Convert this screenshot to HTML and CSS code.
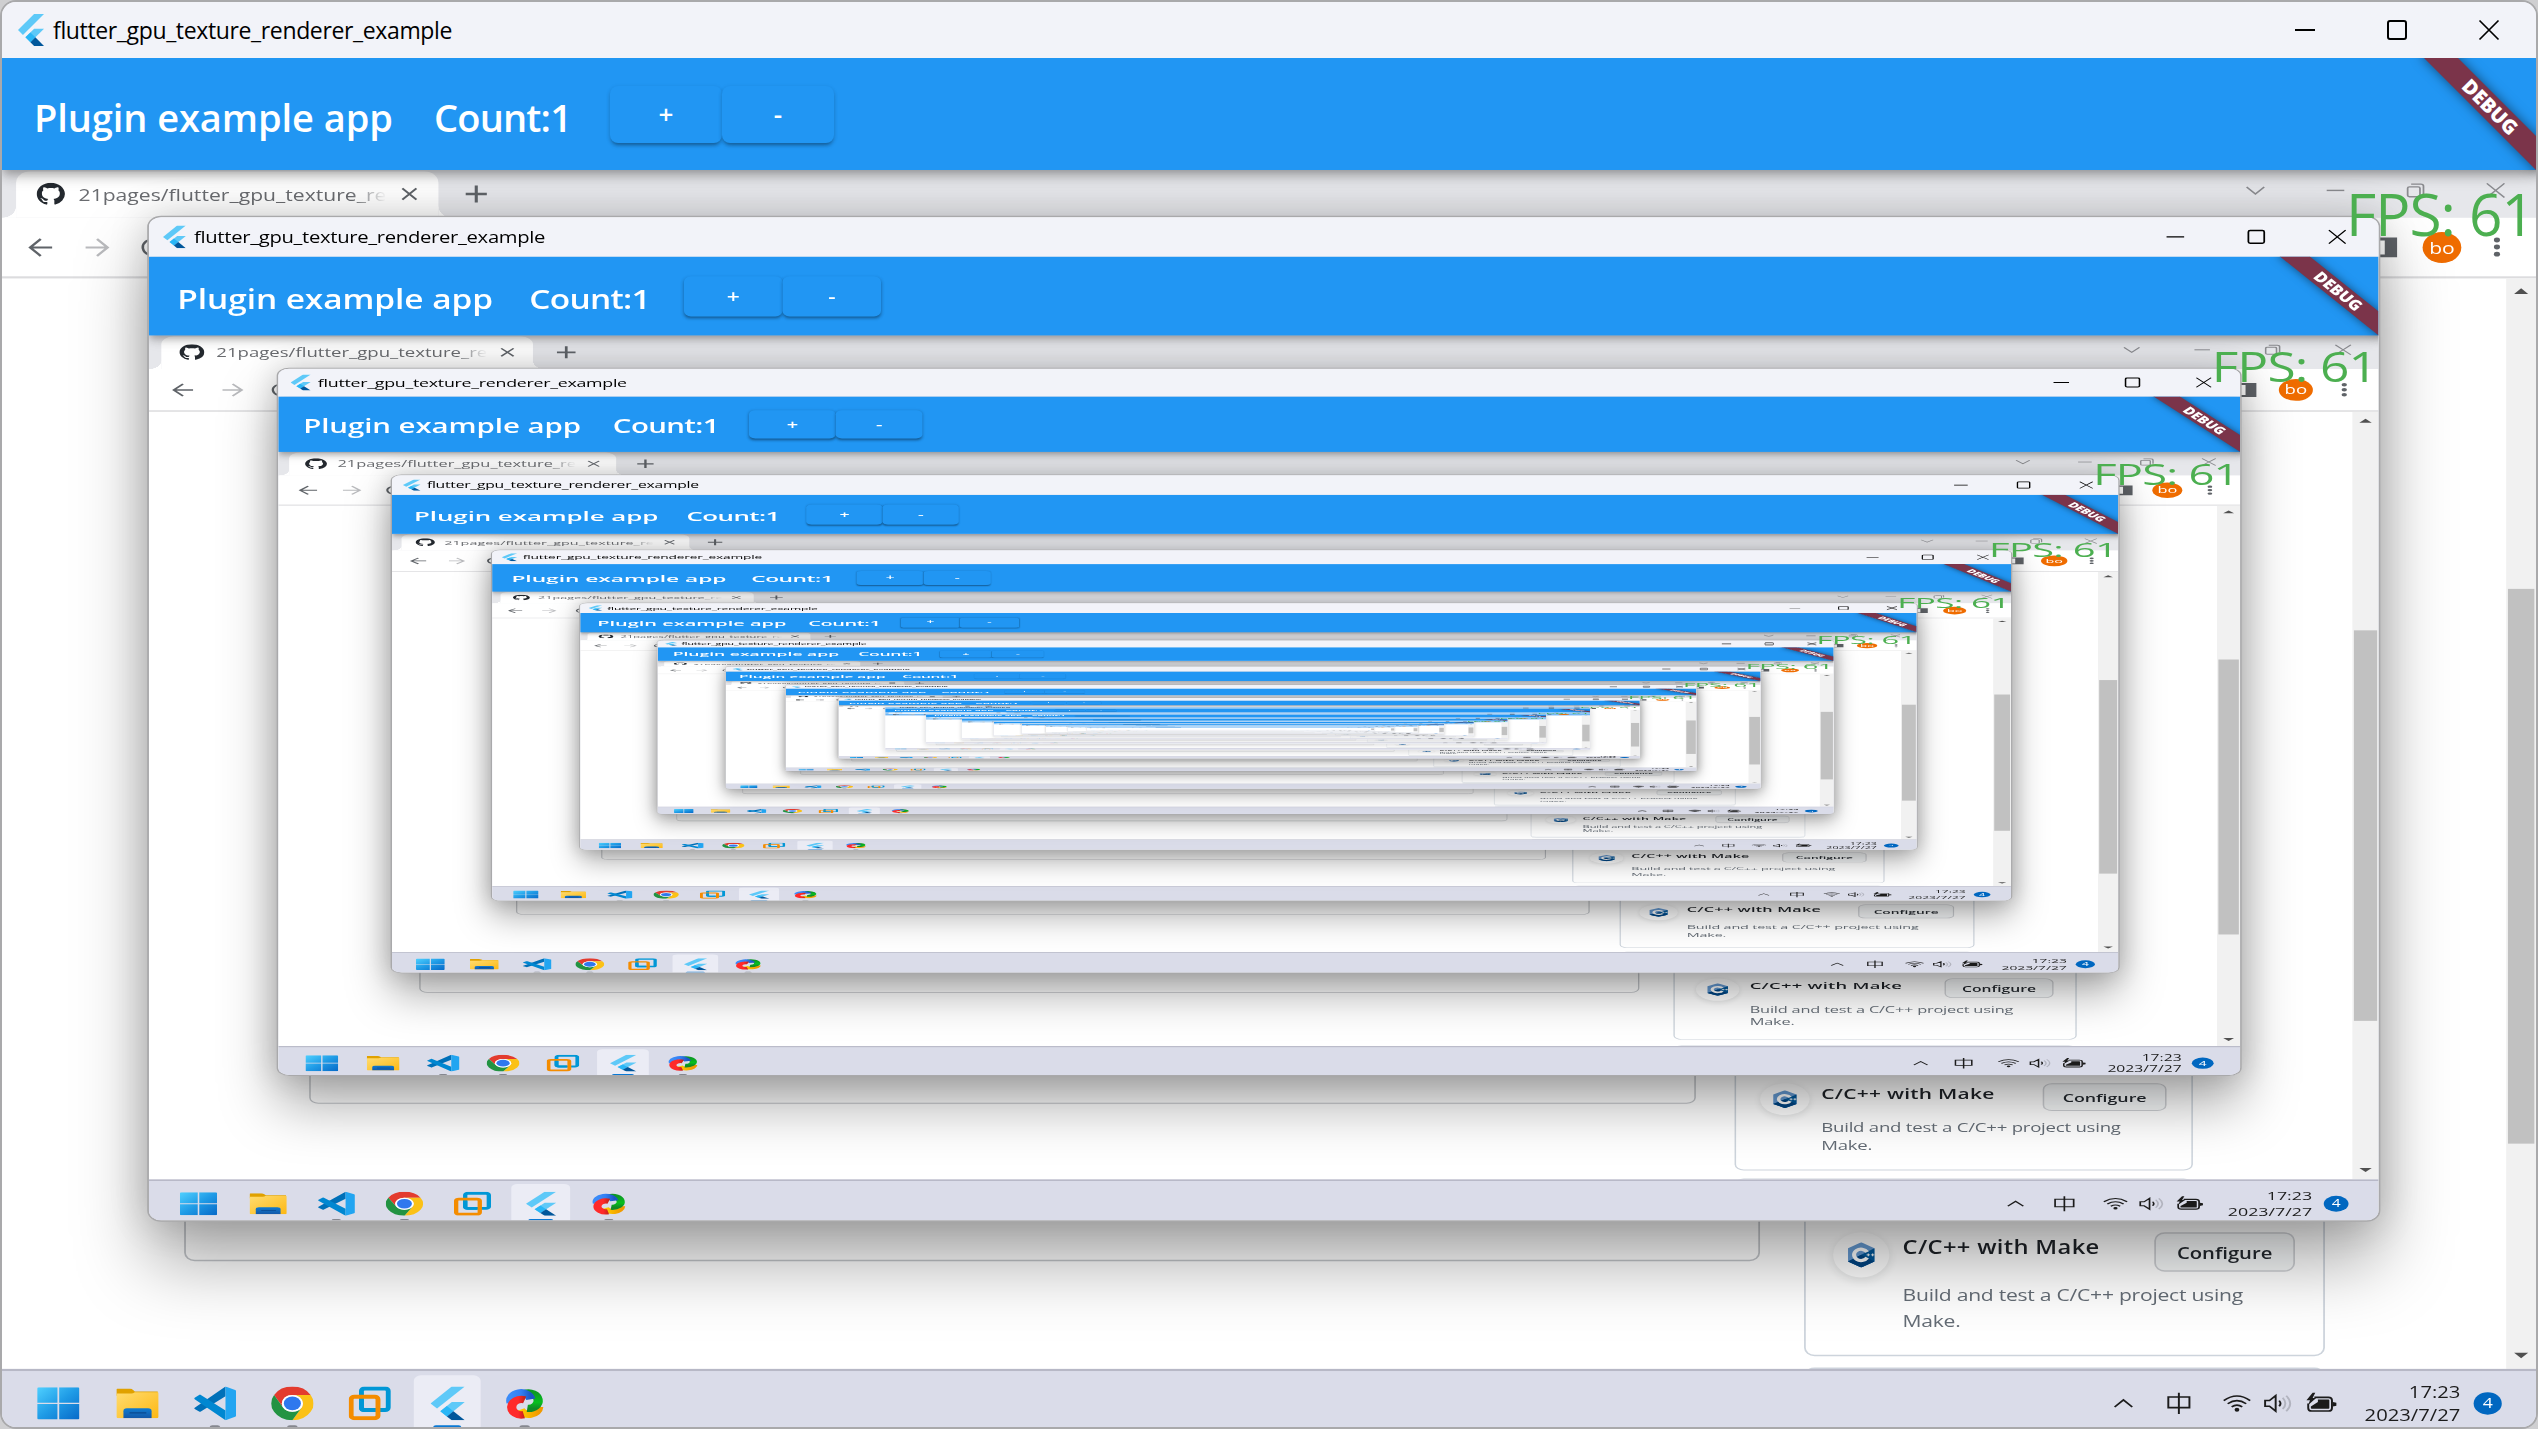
FILE: index.html
```html
<!DOCTYPE html>
<html lang="en">
<head>
<meta charset="utf-8">
<title>flutter_gpu_texture_renderer_example</title>
<link rel="stylesheet" href="styles.css">
</head>
<body>
<svg class="sprite" aria-hidden="true">
  <defs>
    <linearGradient id="g-win" x1="0" y1="0" x2="1" y2="1"><stop offset="0" stop-color="#4fd0ff"/><stop offset=".5" stop-color="#1f9be6"/><stop offset="1" stop-color="#0669c8"/></linearGradient>
    <linearGradient id="g-folder" x1="0" y1="0" x2="1" y2="1"><stop offset="0" stop-color="#ffdc70"/><stop offset="1" stop-color="#fdb813"/></linearGradient>
    <linearGradient id="g-tray" x1="0" y1="0" x2="0" y2="1"><stop offset="0" stop-color="#0f7bd0"/><stop offset="1" stop-color="#1458a8"/></linearGradient>
    <linearGradient id="g-red" x1="0" y1="0" x2="1" y2="0"><stop offset="0" stop-color="#ff2a2a"/><stop offset=".5" stop-color="#ff2a2a"/><stop offset="1" stop-color="#c4221a"/></linearGradient>
    <linearGradient id="g-blue" x1="0" y1="0" x2="1" y2="0"><stop offset="0" stop-color="#3c8cf8"/><stop offset=".5" stop-color="#3280f4"/><stop offset="1" stop-color="#1b56c4"/></linearGradient>
    <linearGradient id="g-green" x1="0" y1="0" x2="0" y2="1"><stop offset="0" stop-color="#0c9a24"/><stop offset=".6" stop-color="#08c01e"/><stop offset="1" stop-color="#118a26"/></linearGradient>
    <linearGradient id="g-yellow" x1="0" y1="0" x2="1" y2="0"><stop offset="0" stop-color="#ffcc00"/><stop offset="1" stop-color="#f09a00"/></linearGradient>
  </defs>
  <symbol id="flutter" viewBox="2.3 0 19.4 24" preserveAspectRatio="none">
    <path fill="#5ec9f8" d="M14.3 0 2.3 12 6 15.7 21.7 0z"/>
    <path fill="#5ec9f8" d="M14.33 11.07 7.86 17.53l3.7 3.7L21.7 11.07z"/>
    <path fill="#29b6f6" d="m7.86 17.53 3.69-3.69 3.69 3.69-3.69 3.7z"/>
    <path fill="#01579b" d="M14.33 24h7.37l-6.46-6.47-3.69 3.7z"/>
  </symbol>
  <symbol id="github" viewBox="0 0 16 16"><path fill="#24292f" d="M8 0C3.58 0 0 3.58 0 8c0 3.54 2.29 6.53 5.47 7.59.4.07.55-.17.55-.38 0-.19-.01-.82-.01-1.49-2.01.37-2.53-.49-2.69-.94-.09-.23-.48-.94-.82-1.13-.28-.15-.68-.52-.01-.53.63-.01 1.08.58 1.23.82.72 1.21 1.87.87 2.33.66.07-.52.28-.87.51-1.07-1.78-.2-3.64-.89-3.64-3.95 0-.87.31-1.59.82-2.15-.08-.2-.36-1.02.08-2.12 0 0 .67-.21 2.2.82.64-.18 1.32-.27 2-.27s1.36.09 2 .27c1.53-1.04 2.2-.82 2.2-.82.44 1.1.16 1.92.08 2.12.51.56.82 1.27.82 2.15 0 3.07-1.87 3.75-3.65 3.95.29.25.54.73.54 1.48 0 1.07-.01 1.93-.01 2.2 0 .21.15.46.55.38A8.01 8.01 0 0 0 16 8c0-4.42-3.58-8-8-8z"/></symbol>
  <symbol id="windows" viewBox="0 0 48 46"><path fill="url(#g-win)" d="M2 0h21v22H0V2a2 2 0 0 1 2-2zM25 0h21a2 2 0 0 1 2 2v20H25zM0 24h23v22H2a2 2 0 0 1-2-2zM25 24h23v20a2 2 0 0 1-2 2H25z"/></symbol>
  <symbol id="folder" viewBox="0 0 48 42">
    <path fill="#e0a100" d="M1 0h14q2 0 4 2l2 2h26v6H0V1z"/>
    <path fill="url(#g-folder)" d="M0 7h17q2 0 4-2h26l1 1v34q0 2-2 2H2q-2 0-2-2z"/>
    <path fill="url(#g-tray)" d="M8 42V32q0-4 4-4h24q4 0 4 4v10z"/>
    <path stroke="#0a4a90" stroke-width="1.6" d="M15 34.500h19"/>
  </symbol>
  <symbol id="vscode" viewBox="0 0 48 48">
    <path fill="#0070b8" d="M36 0v14L8 35.500q-1 1-2 0L1 32q-1-1 0-2z"/>
    <path fill="#0087d1" d="M1 16l5-4q1-1 2 0l28 22v14L1 18q-1-1 0-2z"/>
    <path fill="#22a5f1" d="M36 0l11 5 1 1v36l-1 1-11 5z"/>
  </symbol>
  <symbol id="chrome" viewBox="0 0 48 48">
    <path fill="#e33b2e" d="M3.215 12A24 24 0 0 1 44.785 12H24A12 12 0 0 0 13.608 30z"/>
    <path fill="#fbc116" d="M44.785 12A24 24 0 0 1 24 48L34.392 30A12 12 0 0 0 24 12z"/>
    <path fill="#229342" d="M24 48A24 24 0 0 1 3.215 12L13.608 30A12 12 0 0 0 34.392 30z"/>
    <circle cx="24" cy="24" r="12" fill="#fff"/><circle cx="24" cy="24" r="9.700" fill="#2f78ee"/>
  </symbol>
  <symbol id="vmware" viewBox="0 0 48 48" >
    <rect x="14.500" y="2.800" width="30.500" height="30.500" rx="3.500" fill="none" stroke="#0097d6" stroke-width="5.600"/>
    <rect x="2.800" y="14.500" width="30.500" height="30.500" rx="3.500" fill="none" stroke="#f48c00" stroke-width="5.600"/>
    <path d="M14.500 18v12q0 3.300 3.300 3.300h12" fill="none" stroke="#0097d6" stroke-width="5.600"/>
  </symbol>
  <symbol id="pinwheel" viewBox="0 0 44 44">
    <g fill="none" stroke-width="10.500">
      <path stroke="url(#g-yellow)" d="M38 27A11 11 0 0 1 17 31"/>
      <path stroke="url(#g-green)" d="M22 8A11 11 0 1 1 25 29"/>
      <path stroke="url(#g-blue)" d="M6.500 21A11 11 0 0 1 29 16"/>
      <path stroke="url(#g-red)" d="M21 38A11 11 0 1 1 22 17"/>
    </g>
  </symbol>
  <symbol id="cpp" viewBox="0 0 32 36">
    <path fill="#659ad2" d="M16 0l15 8.500v19L16 36 1 27.500v-19z"/>
    <path fill="#00599c" d="M31 8.500v19L16 36 1 27.500 16 18z"/>
    <path fill="#004482" d="M1 27.500 16 18l15 9.500L16 36z"/>
    <path fill="none" stroke="#fff" stroke-width="4.600" d="M22.800 14A8 8 0 1 0 22.800 22"/>
    <path stroke="#fff" stroke-width="1.300" d="M22 18h4M24 16v4M27 18h4M29 16v4"/>
  </symbol>
</svg>

<template id="window">
  <section class="window">
    <header class="titlebar">
      <svg class="titlebar-logo"><use href="#flutter"/></svg>
      <span class="titlebar-text">flutter_gpu_texture_renderer_example</span>
      <svg class="win-btn" viewBox="0 0 20 20"><path d="M0 10h20"/></svg>
      <svg class="win-btn" viewBox="0 0 20 20"><rect x="1" y="1" width="18" height="18" rx="2"/></svg>
      <svg class="win-btn" viewBox="0 0 20 20"><path class="thin" d="M.5.5l19 19m0-19l-19 19"/></svg>
    </header>
    <main class="app">
      <div class="appbar">
        <span class="appbar-title">Plugin example app</span>
        <span class="appbar-count">Count:1</span>
        <span class="appbar-btn">+</span><span class="appbar-btn">-</span>
      </div>
      <div class="texture">
        <div class="desktop">
          <div class="tabs">
            <div class="tab">
              <svg class="tab-icon"><use href="#github"/></svg>
              <span class="tab-text">21pages/flutter_gpu_texture_renderer</span>
              <svg class="tab-x" viewBox="0 0 18 18"><path d="M1 1l16 16m0-16L1 17"/></svg>
            </div>
            <svg class="tab-plus" viewBox="0 0 24 24"><path d="M12 0v24M0 12h24"/></svg>
            <svg class="caption chevron" viewBox="0 0 20 20"><path d="M0 5l10 10L20 5"/></svg>
            <svg class="caption" viewBox="0 0 20 20"><path d="M0 10h20"/></svg>
            <svg class="caption" viewBox="0 0 20 20"><rect x="1" y="5" width="14" height="14" rx="2"/><path d="M5 1h11q3 0 3 3v11"/></svg>
            <svg class="caption" viewBox="0 0 20 20"><path d="M0 0l20 20m0-20L0 20"/></svg>
          </div>
          <div class="toolbar">
            <svg class="nav" viewBox="0 0 26 26"><path d="M26 13H2M13 1L1 13l12 12"/></svg>
            <svg class="nav off" viewBox="0 0 26 26"><path d="M0 13h24M13 1l12 12-12 12"/></svg>
            <svg class="nav" viewBox="0 0 26 26"><path d="M23 8a11.500 11.500 0 1 0 1 6M24 1v8h-8"/></svg>
            <svg class="panel" viewBox="0 0 34 28"><path d="M0 0h34v28H0zM4 4v20h16V4z"/></svg>
            <span class="avatar">bo</span>
            <span class="dots"><i></i><i></i><i></i></span>
          </div>
          <div class="page">
            <div class="page-body">
              <div class="card wide"></div>
              <div class="column">
                <div class="card make">
                  <div class="lang"><svg><use href="#cpp"/></svg></div>
                  <div class="make-body">
                    <div class="make-head"><b>C/C++ with Make</b><span class="configure">Configure</span></div>
                    <p>Build and test a C/C++ project using<br>Make.</p>
                  </div>
                </div>
                <div class="card next"></div>
              </div>
            </div>
            <div class="scrollbar">
              <svg class="arrow" viewBox="0 0 16 8"><path d="M8 0l8 8H0z"/></svg>
              <div class="thumb"></div>
              <svg class="arrow" viewBox="0 0 16 8"><path d="M0 0h16L8 8z"/></svg>
            </div>
          </div>
          <div class="taskbar">
            <span class="task start"><svg><use href="#windows"/></svg></span>
            <span class="task files"><svg><use href="#folder"/></svg></span>
            <span class="task open"><svg><use href="#vscode"/></svg></span>
            <span class="task open"><svg><use href="#chrome"/></svg></span>
            <span class="task"><svg><use href="#vmware"/></svg></span>
            <span class="task active"><svg><use href="#flutter"/></svg></span>
            <span class="task open wheel"><svg><use href="#pinwheel"/></svg></span>
            <svg class="tray-up" viewBox="0 0 22 12"><path d="M1 11L11 1l10 10"/></svg>
            <svg class="tray-ime" viewBox="0 0 26 30"><path d="M13 0v30M1 6h24v15H1z"/></svg>
            <svg class="tray-wifi" viewBox="0 0 32 24"><path d="M1 8Q16-5 31 8M5.500 12.500q10.500-9 21 0M10 17q6-5 12 0"/><circle cx="16" cy="21" r="2.700"/></svg>
            <svg class="tray-sound" viewBox="0 0 32 26"><path d="M1 9v8h5l7 7V2L6 9zM17 9q3 4 0 8"/><path class="faint" d="M21 5q6 8 0 16M25 2q9 11 0 22"/></svg>
            <svg class="tray-battery" viewBox="0 0 34 24" preserveAspectRatio="none"><path d="M9 4h16q4 0 4 4v10q0 4-4 4H6q-4 0-4-4v-6"/><path class="solid" d="M13 7h12q1 0 1 1v10q0 1-1 1H6q-1 0-1-1v-2l8-6zM30 10l4 1v4l-4 1zM7-2L0 8h4l-2 6 9-9H7l3-7z"/></svg>
            <div class="clock">17:23<br>2023/7/27</div>
            <span class="badge">4</span>
          </div>
        </div>
      </div>
      <div class="debug"><span>DEBUG</span></div>
      <div class="fps">FPS: 61</div>
    </main>
  </section>
</template>

<script src="script.js"></script>
</body>
</html>
```
FILE: styles.css
```css
* { box-sizing: border-box; }

body {
  margin: 0;
  width: 2538px;
  height: 1429px;
  overflow: hidden;
  background: #cfcfd1;
  font-family: "Open Sans", "Noto Sans", sans-serif;
}

.sprite { position: absolute; width: 0; height: 0; }
svg { display: block; flex: none; overflow: visible; }

/* Application window */
.window {
  width: 2538px;
  height: 1429px;
  display: flex;
  flex-direction: column;
  border: 2px solid #a9a9ab;
  border-radius: 16px;
  overflow: hidden;
  background: #f2f3f9;
}

.titlebar {
  flex: none;
  height: 56px;
  display: flex;
  align-items: center;
  padding: 0 37px 0 16px;
  gap: 72px;
  background: #f2f3f9;
}
.titlebar-logo { width: 26px; height: 32px; margin-right: -63px; }
.titlebar-text { font-size: 23px; letter-spacing: -.36px; color: #000; margin-right: auto; white-space: nowrap; }
.win-btn { width: 20px; height: 20px; fill: none; stroke: #000; stroke-width: 2; }
.win-btn .thin { stroke-width: 1.700; }

.app {
  flex: 1;
  position: relative;
  display: flex;
  flex-direction: column;
  overflow: hidden;
}

.appbar {
  flex: none;
  position: relative;
  z-index: 1;
  height: 112px;
  display: flex;
  align-items: center;
  padding-left: 32px;
  background: #2196f3;
  color: #fff;
  white-space: nowrap;
  font-weight: 600;
  box-shadow: 0 4px 8px -2px rgba(0, 0, 0, .2), 0 8px 10px rgba(0, 0, 0, .14), 0 2px 20px rgba(0, 0, 0, .12);
}
.appbar-title, .appbar-count { font-size: 38px; line-height: 56px; padding-top: 5px; }
.appbar-title { width: 400px; letter-spacing: -.08px; }
.appbar-count { width: 176px; letter-spacing: -.8px; }
.appbar-btn {
  width: 112px;
  height: 57px;
  border-radius: 8px;
  display: flex;
  align-items: center;
  justify-content: center;
  font-size: 26px;
  background: #2196f3;
  box-shadow: 0 4px 3px -2px rgba(0, 0, 0, .2), 0 3px 4px rgba(0, 0, 0, .14), 0 1px 5px rgba(0, 0, 0, .08);
}

.debug {
  position: absolute;
  z-index: 2;
  top: 0;
  right: 0;
  width: 130px;
  height: 130px;
  overflow: hidden;
}
.debug span {
  position: absolute;
  left: -1px;
  top: 37px;
  width: 170px;
  height: 24px;
  transform: rotate(45deg);
  background: #7b344a;
  box-shadow: 0 0 12px rgba(0, 0, 0, .5);
  color: #fff;
  font-size: 20px;
  font-weight: 800;
  line-height: 24px;
  text-align: center;
}

.fps {
  position: absolute;
  z-index: 2;
  top: 115px;
  right: 2px;
  font-size: 58.500px;
  line-height: 80px;
  letter-spacing: -1px;
  color: #4caf50;
  white-space: nowrap;
}

/* Captured desktop, stretched into the texture area */
.texture { flex: 1; overflow: hidden; }
.desktop {
  position: relative;
  width: 2880px;
  height: 1800px;
  display: flex;
  flex-direction: column;
  background: #fff;
  transform: scale(.8799, .704);
  transform-origin: 0 0;
}
.desktop > .window {
  position: absolute;
  left: 165.200px;
  top: 65.300px;
  box-shadow: 0 56px 90px rgba(0, 0, 0, .34), 0 0 50px rgba(0, 0, 0, .16);
}

.tabs {
  flex: none;
  height: 68px;
  display: flex;
  align-items: center;
  gap: 71px;
  padding: 0 36px 10px 16px;
  background: #e6e7eb;
}
.tab {
  position: relative;
  width: 480px;
  height: 66px;
  margin: 2px -40px -10px 0;
  display: flex;
  align-items: center;
  padding: 0 24px 2px 23px;
  background: #fff;
  border-radius: 16px 16px 0 0;
}
.tab::before, .tab::after {
  content: "";
  position: absolute;
  bottom: 0;
  width: 16px;
  height: 16px;
}
.tab::before { left: -16px; background: radial-gradient(circle at 0 0, transparent 15.500px, #fff 16px); }
.tab::after { right: -16px; background: radial-gradient(circle at 100% 0, transparent 15.500px, #fff 16px); }
.tab-icon { width: 33px; height: 32px; margin-right: 15px; }
.tab-text {
  width: 352px;
  margin-right: auto;
  overflow: hidden;
  white-space: nowrap;
  font-size: 24px;
  color: #6a6c70;
  -webkit-mask-image: linear-gradient(90deg, #000 310px, transparent 350px);
  mask-image: linear-gradient(90deg, #000 310px, transparent 350px);
}
.tab-x { width: 18px; height: 18px; fill: none; stroke: #5f6368; stroke-width: 2.500; }
.tab-plus { width: 24px; height: 24px; margin: 10px auto 0 0; stroke: #5f6368; stroke-width: 3.500; }
.caption { width: 20px; height: 20px; fill: none; stroke: #8b8c90; stroke-width: 2; }

.toolbar {
  flex: none;
  height: 86px;
  display: flex;
  align-items: center;
  padding: 0 34px 0 31px;
  background: #fff;
  border-bottom: 3px solid #dcdcde;
}
.nav { width: 26px; height: 26px; margin-right: 38px; fill: none; stroke: #5f6368; stroke-width: 3; }
.nav.off { stroke: #b9babd; }
.panel { width: 34px; height: 28px; margin: 0 29px 0 auto; fill: #5f6368; fill-rule: evenodd; }
.avatar {
  width: 44px;
  height: 44px;
  margin-right: 37px;
  border-radius: 50%;
  background: #ef6c00;
  color: #fff;
  font-size: 24px;
  font-weight: 500;
  line-height: 43px;
  text-align: center;
}
.dots { display: flex; flex-direction: column; gap: 3px; padding-right: 7px; }
.dots i { width: 7px; height: 7px; border-radius: 50%; background: #5f6368; }

.page { flex: none; height: 1549px; display: flex; overflow: hidden; }
.page-body {
  flex: 1;
  display: flex;
  align-items: flex-start;
  gap: 50px;
  padding: 1321px 0 0 207px;
}
.card { border: 2px solid #cdd4dc; border-radius: 12px; }
.wide { width: 1791px; height: 75px; border-color: #c3c6ca; }
.column { width: 592px; display: flex; flex-direction: column; gap: 16px; }
.make { height: 210px; display: flex; padding: 32px 32px 0; gap: 15px; }
.next { height: 100px; }
.lang {
  flex: none;
  width: 64px;
  height: 64px;
  margin-left: -1px;
  display: flex;
  align-items: center;
  justify-content: center;
  border-radius: 50%;
  background: rgba(255, 255, 255, .15);
  box-shadow: 0 4px 12px rgba(27, 31, 36, .12);
}
.lang svg { width: 32px; height: 36px; }
.make-body { flex: 1; }
.make-head { display: flex; justify-content: space-between; }
.make b { font-size: 27px; line-height: 42px; font-weight: 600; letter-spacing: .35px; color: #1f2328; white-space: nowrap; }
.configure {
  width: 160px;
  height: 56px;
  border: 2px solid #cfd1d5;
  border-radius: 12px;
  background: rgba(240, 243, 246, .5);
  color: #24292f;
  font-size: 23px;
  font-weight: 600;
  line-height: 54px;
  text-align: center;
}
.make p { margin: 15px 0 0; font-size: 24px; letter-spacing: -.3px; line-height: 36px; color: #656d76; white-space: nowrap; }

.scrollbar {
  width: 34px;
  display: flex;
  flex-direction: column;
  align-items: center;
  padding: 14px 0 15px;
  background: #f1f1f1;
}
.arrow { width: 16px; height: 8px; fill: #505050; }
.thumb { width: 30px; height: 788px; margin: 419px 0 auto; background: #c1c1c1; }

.taskbar {
  flex: none;
  height: 97px;
  display: flex;
  align-items: center;
  padding: 0 39px 2px 22px;
  border-top: 3px solid #b7b8c6;
  background: #dadce9;
}
.task {
  position: relative;
  flex: none;
  width: 76px;
  height: 80px;
  margin: 0 6px;
  display: flex;
  align-items: center;
  justify-content: center;
  border-radius: 8px;
}
.task svg { width: 48px; height: 48px; }
.start svg { height: 46px; margin-left: -4px; }
.files svg { height: 42px; }
.wheel svg { width: 44px; height: 46px; }
.active { background: #ebecf5; }
.active svg { width: 39px; height: 48px; }
.open::after, .active::after {
  content: "";
  position: absolute;
  bottom: 3px;
  width: 12px;
  height: 6px;
  border-radius: 3px;
  background: #85878f;
}
.active::after { width: 32px; background: #0a78d4; }
.taskbar > svg { fill: none; stroke: #1b1b1b; stroke-width: 2.200; }
.tray-up { width: 22px; height: 12px; margin: 0 39px 0 auto; }
.tray-ime { width: 26px; height: 30px; margin-right: 37px; }
.tray-wifi { width: 32px; height: 24px; margin-right: 15px; }
.tray-wifi circle, .solid { fill: #1b1b1b; stroke: none; }
.tray-sound { width: 32px; height: 26px; margin-right: 16px; }
.faint { stroke: #b2b4bf; }
.tray-battery { width: 34px; height: 26px; margin-right: 30px; }
.clock { width: 111px; font-size: 23px; line-height: 32px; color: #1b1b1b; text-align: right; white-space: nowrap; }
.badge {
  width: 32px;
  height: 32px;
  margin-left: 15px;
  border-radius: 50%;
  background: #0067c0;
  color: #fff;
  font-size: 20px;
  line-height: 32px;
  text-align: center;
}

/* Levels where the title and tab strips are thinner than a pixel */
.far > .titlebar,
.far > .app > .texture > .desktop > .tabs,
.far > .app > .texture > .desktop > .toolbar { background: #72b8f5; }
.far > .app > .appbar { box-shadow: none; }
.desktop > .far.window { border-color: #72b8f5 #d0d0d4 #c4c4cc; box-shadow: 0 56px 70px rgba(0, 0, 0, .15); }
```
FILE: script.js
```js
// Each captured desktop shows the same window again, one level deeper.
const DEPTH = 18;
const FAR = 10;
const template = document.getElementById("window");
let host = document.body;
for (let level = 0; level < DEPTH; level++) {
  const copy = template.content.firstElementChild.cloneNode(true);
  if (level >= FAR) copy.classList.add("far");
  host.append(copy);
  host = copy.querySelector(".desktop");
}
```
